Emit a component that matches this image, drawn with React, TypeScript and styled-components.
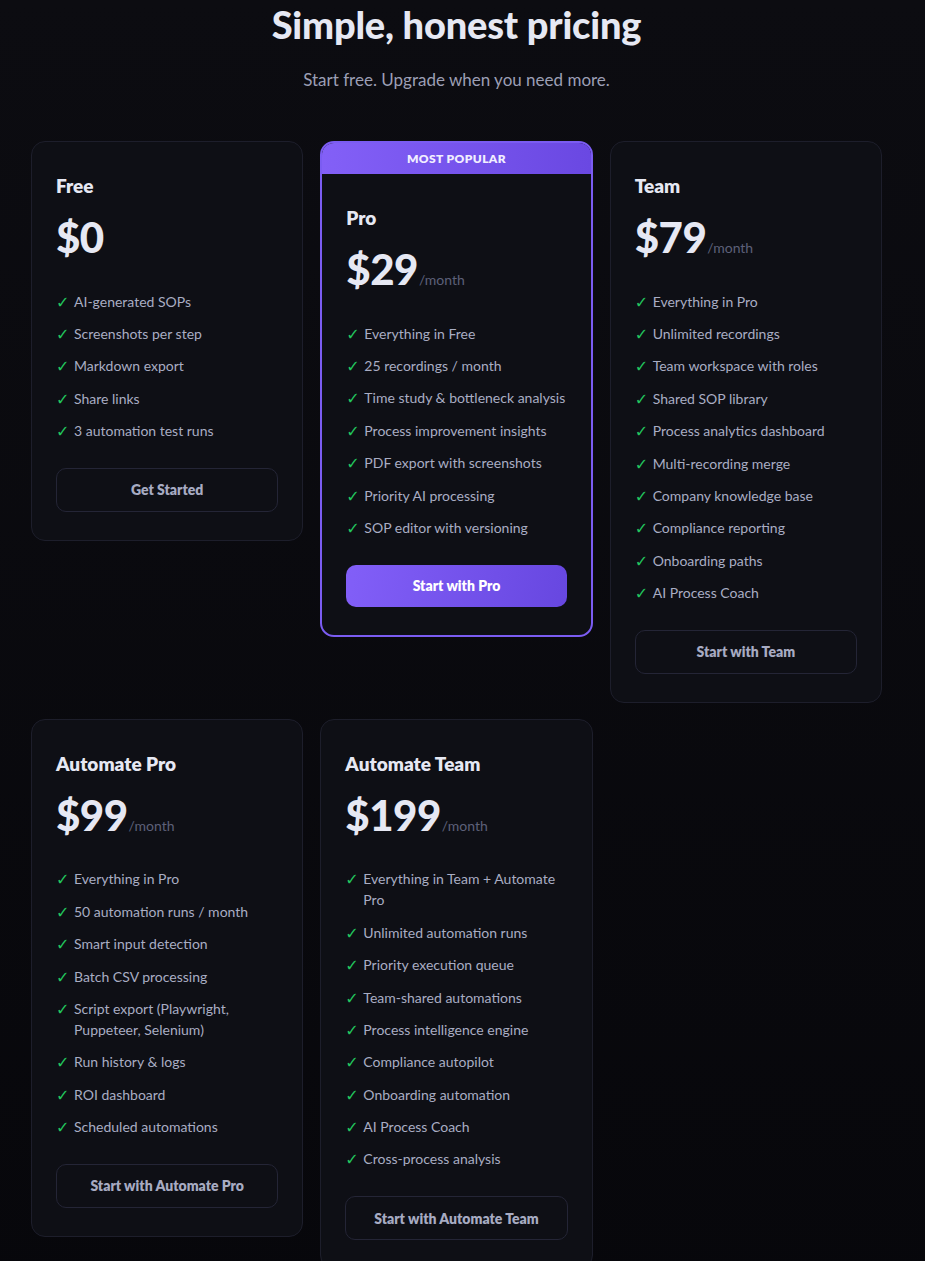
import styled, { createGlobalStyle, css } from "styled-components";

const GlobalStyle = createGlobalStyle`
  html, body {
    margin: 0;
    padding: 0;
    background: linear-gradient(180deg, #0c0c11 0%, #07070b 100%);
    min-height: 100%;
  }
  body {
    font-family: Lato, "Noto Sans", sans-serif;
    color: #e4e6f0;
  }
  * { box-sizing: border-box; }
`;

const Page = styled.div`
  min-height: 1261px;
  padding: 0 43px 40px 31px;
`;

const Header = styled.header`
  width: 851px;
  display: flex;
  flex-direction: column;
  align-items: center;
`;

const Title = styled.h1`
  margin: 0;
  font-size: 38px;
  line-height: 48px;
  font-weight: 900;
  color: #e6e8f3;
  letter-spacing: -0.2px;
`;

const Subtitle = styled.p`
  margin: 20px 0 0;
  font-size: 17px;
  line-height: 24px;
  color: #9c9fb5;
`;

const Grid = styled.div`
  margin-top: 49px;
  width: 851px;
  display: grid;
  grid-template-columns: repeat(3, 1fr);
  column-gap: 17px;
  row-gap: 16px;
  align-items: start;
`;

const Card = styled.div<{ $featured?: boolean }>`
  background: #0e0f15;
  border: 1px solid #1d1e2b;
  border-radius: 14px;
  overflow: hidden;
  display: flex;
  flex-direction: column;
  ${(p) =>
    p.$featured &&
    css`
      border: 2px solid #7b5cf2;
    `}
`;

const Badge = styled.div`
  height: 31px;
  display: flex;
  align-items: center;
  justify-content: center;
  background: linear-gradient(90deg, #8360f7 0%, #6a48e2 100%);
  color: #f1eeff;
  font-size: 12px;
  font-weight: 800;
  letter-spacing: 0.4px;
  text-transform: uppercase;
`;

const Body = styled.div`
  padding: 32px 24px 28px;
  display: flex;
  flex-direction: column;
`;

const PlanName = styled.h3`
  margin: 0;
  font-size: 19px;
  line-height: 23px;
  font-weight: 800;
  color: #e6e8f3;
`;

const PriceRow = styled.div`
  margin-top: 16px;
  display: flex;
  align-items: baseline;
`;

const Price = styled.span`
  font-size: 42px;
  line-height: 48px;
  font-weight: 900;
  color: #e6e8f3;
  letter-spacing: -0.5px;
`;

const Period = styled.span`
  margin-left: 1px;
  font-size: 14px;
  color: #5d6079;
`;

const Features = styled.ul`
  list-style: none;
  margin: 24px 0 0;
  padding: 0;
`;

const Feature = styled.li`
  display: flex;
  align-items: flex-start;
  padding: 5.7px 0;
  font-size: 14px;
  line-height: 21px;
  color: #a9adc3;
`;

const Check = styled.span`
  flex: 0 0 18px;
  color: #22c55e;
  font-size: 16px;
  position: relative;
  top: 1px;
  font-family: "DejaVu Sans", sans-serif;
`;

const Button = styled.button<{ $primary?: boolean }>`
  margin-top: 21px;
  height: 44px;
  width: 100%;
  border-radius: 10px;
  border: 1px solid #242536;
  background: transparent;
  color: #a7abc2;
  font-family: Lato, "Noto Sans", sans-serif;
  font-size: 14px;
  font-weight: 800;
  cursor: pointer;
  ${(p) =>
    p.$primary &&
    css`
      border: none;
      height: 42px;
      background: linear-gradient(100deg, #825ff8 0%, #6747e0 100%);
      color: #ffffff;
    `}
`;

type Plan = {
  name: string;
  price: string;
  period?: boolean;
  features: string[];
  cta: string;
  featured?: boolean;
};

const plans: Plan[] = [
  {
    name: "Free",
    price: "$0",
    features: [
      "AI-generated SOPs",
      "Screenshots per step",
      "Markdown export",
      "Share links",
      "3 automation test runs",
    ],
    cta: "Get Started",
  },
  {
    name: "Pro",
    price: "$29",
    period: true,
    featured: true,
    features: [
      "Everything in Free",
      "25 recordings / month",
      "Time study & bottleneck analysis",
      "Process improvement insights",
      "PDF export with screenshots",
      "Priority AI processing",
      "SOP editor with versioning",
    ],
    cta: "Start with Pro",
  },
  {
    name: "Team",
    price: "$79",
    period: true,
    features: [
      "Everything in Pro",
      "Unlimited recordings",
      "Team workspace with roles",
      "Shared SOP library",
      "Process analytics dashboard",
      "Multi-recording merge",
      "Company knowledge base",
      "Compliance reporting",
      "Onboarding paths",
      "AI Process Coach",
    ],
    cta: "Start with Team",
  },
  {
    name: "Automate Pro",
    price: "$99",
    period: true,
    features: [
      "Everything in Pro",
      "50 automation runs / month",
      "Smart input detection",
      "Batch CSV processing",
      "Script export (Playwright, Puppeteer, Selenium)",
      "Run history & logs",
      "ROI dashboard",
      "Scheduled automations",
    ],
    cta: "Start with Automate Pro",
  },
  {
    name: "Automate Team",
    price: "$199",
    period: true,
    features: [
      "Everything in Team + Automate Pro",
      "Unlimited automation runs",
      "Priority execution queue",
      "Team-shared automations",
      "Process intelligence engine",
      "Compliance autopilot",
      "Onboarding automation",
      "AI Process Coach",
      "Cross-process analysis",
    ],
    cta: "Start with Automate Team",
  },
];

export default function App() {
  return (
    <>
      <GlobalStyle />
      <Page>
        <Header>
          <Title>Simple, honest pricing</Title>
          <Subtitle>Start free. Upgrade when you need more.</Subtitle>
        </Header>
        <Grid>
          {plans.map((plan) => (
            <Card key={plan.name} $featured={plan.featured}>
              {plan.featured ? <Badge>Most Popular</Badge> : null}
              <Body>
                <PlanName>{plan.name}</PlanName>
                <PriceRow>
                  <Price>{plan.price}</Price>
                  {plan.period ? <Period>/month</Period> : null}
                </PriceRow>
                <Features>
                  {plan.features.map((f) => (
                    <Feature key={f}>
                      <Check>✓</Check>
                      <span>{f}</span>
                    </Feature>
                  ))}
                </Features>
                <Button $primary={plan.featured}>{plan.cta}</Button>
              </Body>
            </Card>
          ))}
        </Grid>
      </Page>
    </>
  );
}
